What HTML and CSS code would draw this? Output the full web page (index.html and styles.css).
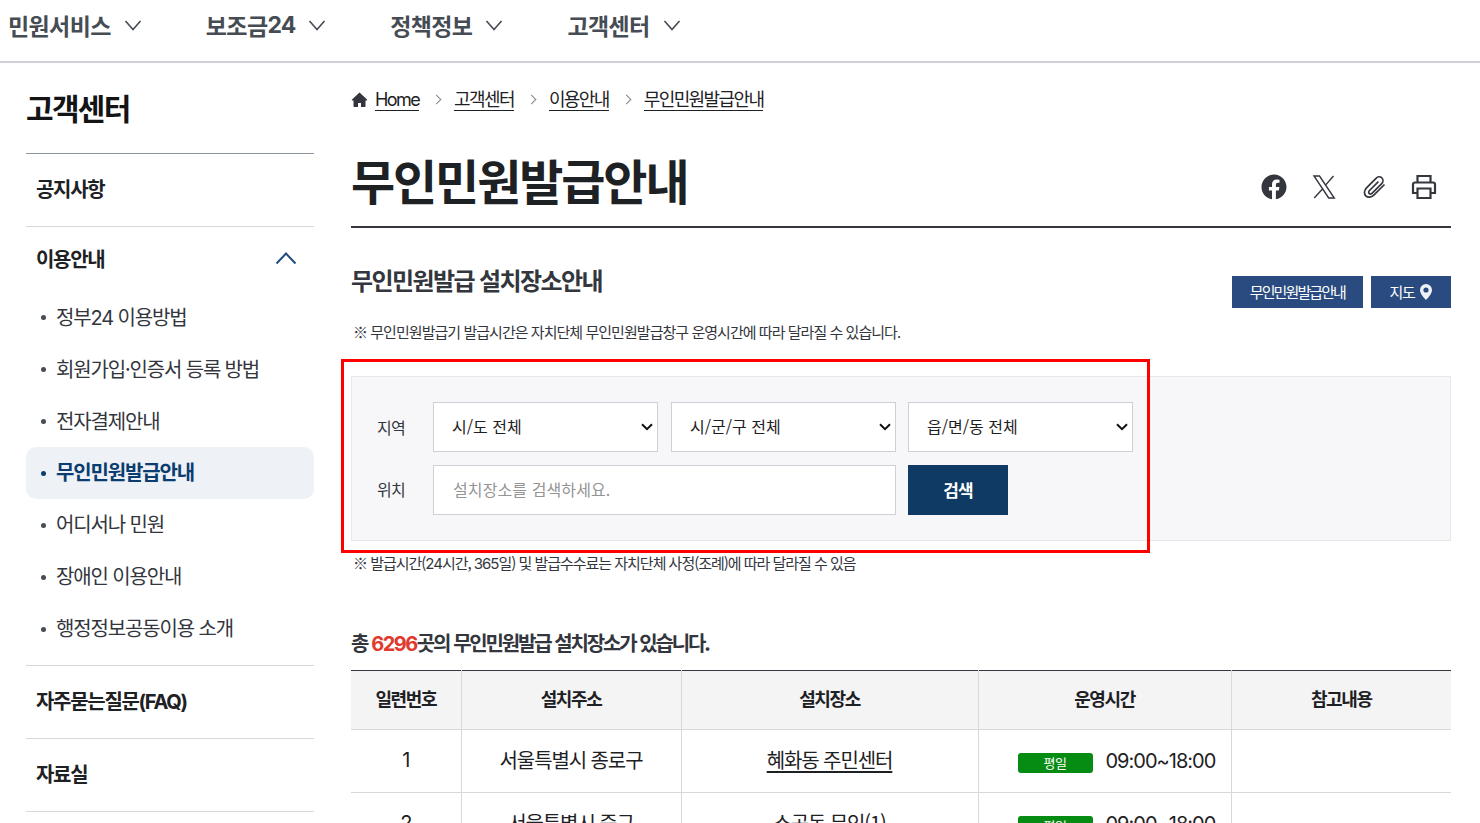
FILE: index.html
```html
<!DOCTYPE html>
<html lang="ko">
<head>
<meta charset="utf-8">
<title>무인민원발급안내</title>
<link rel="stylesheet" href="styles.css">
</head>
<body>
<header class="topbar">
  <nav class="gnb">
    <a class="gnb-item">민원서비스<svg class="chev" viewBox="0 0 18 12"><path d="M1.500 2 9 10.500 16.500 2"/></svg></a>
    <a class="gnb-item">보조금<span class="lat num">24</span><svg class="chev" viewBox="0 0 18 12"><path d="M1.500 2 9 10.500 16.500 2"/></svg></a>
    <a class="gnb-item">정책정보<svg class="chev" viewBox="0 0 18 12"><path d="M1.500 2 9 10.500 16.500 2"/></svg></a>
    <a class="gnb-item">고객센터<svg class="chev" viewBox="0 0 18 12"><path d="M1.500 2 9 10.500 16.500 2"/></svg></a>
  </nav>
</header>
<div class="wrap">
  <aside class="side">
    <h2 class="side-title">고객센터</h2>
    <ul class="menu">
      <li class="menu-item"><a class="menu-link">공지사항</a></li>
      <li class="menu-item open">
        <a class="menu-link">이용안내<svg class="up" viewBox="0 0 22 14"><path d="M1.500 12.500 11 2.500l9.500 10"/></svg></a>
        <ul class="sub">
          <li>정부<span class="lat">24</span> 이용방법</li>
          <li>회원가입·인증서 등록 방법</li>
          <li>전자결제안내</li>
          <li class="on">무인민원발급안내</li>
          <li>어디서나 민원</li>
          <li>장애인 이용안내</li>
          <li>행정정보공동이용 소개</li>
        </ul>
      </li>
      <li class="menu-item"><a class="menu-link"><span>자주묻는질문<span class="lat">(FAQ)</span></span></a></li>
      <li class="menu-item"><a class="menu-link">자료실</a></li>
    </ul>
  </aside>
  <main class="main">
    <div class="crumbs">
      <svg class="home" viewBox="0 0 16 16"><path d="M8 .5.500 7.500c-.4.4-.1 1 .4 1H2v5.500c0 .6.4 1 1 1h3.500v-4h3v4H13c.6 0 1-.4 1-1V8.500h1.100c.5 0 .8-.6.4-1z"/></svg>
      <a class="crumb crumb-home lat">Home</a><span class="sep"></span>
      <a class="crumb">고객센터</a><span class="sep"></span>
      <a class="crumb">이용안내</a><span class="sep"></span>
      <a class="crumb">무인민원발급안내</a>
    </div>
    <div class="title-row">
      <h1 class="page-title">무인민원발급안내</h1>
      <div class="tools">
        <svg class="tool" viewBox="0 0 26 26"><path class="fill" d="M25.500 13C25.500 6.100 19.900.5 13 .5S.5 6.100.5 13c0 6.200 4.600 11.400 10.500 12.300v-8.700H7.900V13H11v-2.700c0-3.100 1.900-4.900 4.700-4.900 1.400 0 2.800.3 2.800.3v3.100h-1.600c-1.500 0-2 1-2 1.900V13h3.500l-.6 3.600h-2.900v8.700c6-1 10.600-6.100 10.600-12.300z"/></svg>
        <svg class="tool" viewBox="0 0 26 26"><path class="line thin" d="M3 2h5.500L23.300 24h-5.600zM22.500 2 14.300 11.400M11.700 14.700 3.200 24"/></svg>
        <svg class="tool" viewBox="0 0 26 26"><path class="line slim" d="M23.500 10.500 12.800 21.200c-2.400 2.400-6 2.700-8 .7s-1.700-5.600.7-8L15 4.400c1.700-1.700 4.300-2 5.900-.4 1.600 1.600 1.300 4.200-.4 5.900l-9.300 9.300c-.9.900-2.200 1-3 .3-.8-.8-.6-2.100.3-3l8.900-8.900"/></svg>
        <svg class="tool" viewBox="0 0 26 26"><path class="line" d="M6.500 8.500V2h13v6.500M6.500 19H2V10.500a2 2 0 0 1 2-2h18a2 2 0 0 1 2 2V19h-4.500M6.500 14.500h13V24h-13z"/></svg>
      </div>
    </div>
    <section class="sect-head">
      <div>
        <h3 class="sect-title">무인민원발급 설치장소안내</h3>
        <p class="note first">※ 무인민원발급기 발급시간은 자치단체 무인민원발급창구 운영시간에 따라 달라질 수 있습니다.</p>
      </div>
      <div class="btns">
        <a class="btn">무인민원발급안내</a>
        <a class="btn map">지도<svg class="pin" viewBox="0 0 12 16"><path fill-rule="evenodd" d="M6 0a6 6 0 0 0-6 6c0 3.800 4.400 8.500 6 10 1.600-1.500 6-6.200 6-10a6 6 0 0 0-6-6zm0 3.400a2.600 2.600 0 1 1 0 5.200 2.600 2.600 0 0 1 0-5.200z"/></svg></a>
      </div>
    </section>
    <section class="search">
      <div class="search-row">
        <label class="lab">지역</label>
        <select class="sel"><option>시/도 전체</option></select>
        <select class="sel"><option>시/군/구 전체</option></select>
        <select class="sel"><option>읍/면/동 전체</option></select>
      </div>
      <div class="search-row second-row">
        <label class="lab">위치</label>
        <input class="inp" type="text" placeholder="설치장소를 검색하세요.">
        <button class="go">검색</button>
      </div>
      <div class="redbox"></div>
    </section>
    <p class="note second">※ 발급시간(<span class="lat">24</span>시간, <span class="lat">365</span>일) 및 발급수수료는 자치단체 사정(조례)에 따라 달라질 수 있음</p>
    <p class="total">총 <em class="lat">6296</em>곳의 무인민원발급 설치장소가 있습니다.</p>
    <table class="tbl">
      <colgroup><col class="c1"><col class="c2"><col class="c3"><col class="c4"><col></colgroup>
      <thead><tr><th>일련번호</th><th>설치주소</th><th>설치장소</th><th>운영시간</th><th>참고내용</th></tr></thead>
      <tbody>
        <tr><td class="lat">1</td><td>서울특별시 종로구</td><td><a class="place">혜화동 주민센터</a></td><td class="time"><span class="badge">평일</span><span class="lat">09:00~18:00</span></td><td></td></tr>
        <tr><td class="lat">2</td><td>서울특별시 중구</td><td><a class="place">소공동 무인(1)</a></td><td class="time"><span class="badge">평일</span><span class="lat">09:00~18:00</span></td><td></td></tr>
      </tbody>
    </table>
  </main>
</div>
</body>
</html>
```
FILE: styles.css
```css
* { box-sizing: border-box; }
html, body { margin: 0; height: 823px; overflow: hidden; background: #fff; }
body { font-family: "Noto Sans CJK KR", "Noto Sans", sans-serif; color: #1e2124; }
ul { list-style: none; margin: 0; padding: 0; }
h1, h2, h3, p { margin: 0; }
a { color: inherit; }
.lat { font-family: Inter, "Noto Sans CJK KR", sans-serif; }

.topbar { height: 63px; border-bottom: 2px solid #cdd1d5; }
.gnb { display: flex; gap: 64px; height: 50px; align-items: center; padding-left: 8px; }
.gnb-item { display: flex; align-items: center; font-size: 23px; font-weight: 700; letter-spacing: -0.6px; color: #464c53; }
.num { letter-spacing: -1px; }
.chev { width: 18px; height: 12px; margin-left: 13px; fill: none; stroke: #464c53; stroke-width: 1.6; }

.wrap { display: flex; padding: 0 29px 0 26px; }
.side { width: 288px; flex: none; margin-right: 37px; }
.side-title { height: 91px; padding-top: 22px; font-size: 30px; line-height: 44px; font-weight: 700; letter-spacing: -1.7px; color: #131416; border-bottom: 1px solid #8a949e; }
.menu-item { border-bottom: 1px solid #d6d9dc; }
.menu-link { display: flex; align-items: center; justify-content: space-between; height: 72px; padding: 0 17px 4px 10px; font-size: 20px; font-weight: 700; letter-spacing: -1.3px; color: #1e2124; }
.open .menu-link { height: 64px; padding-bottom: 2px; }
.up { width: 22px; height: 14px; fill: none; stroke: #1d4a7a; stroke-width: 1.9; }
.sub { padding-bottom: 10px; }
.sub li { position: relative; height: 52px; line-height: 50px; padding-left: 30px; font-size: 20px; letter-spacing: -1.15px; color: #33363d; border-radius: 10px; }
.sub li:nth-child(-n+3) { line-height: 52px; }
.sub li::before { content: ""; position: absolute; left: 15px; top: 24px; width: 5px; height: 5px; border-radius: 50%; background: #464c53; }
.sub li.on { background: #eef1f6; color: #0b3d70; font-weight: 700; }
.sub li.on::before { background: #0b3d70; }

.main { width: 1100px; flex: none; }
.crumbs { display: flex; align-items: center; height: 26px; margin-top: 22px; font-size: 18px; letter-spacing: -1.6px; color: #1e2124; }
.home { width: 17px; height: 16px; margin: 4px 7px 0 0; fill: #33363d; }
.crumb { height: 25px; line-height: 24px; border-bottom: 1px solid #1e2124; }
.crumb-home { line-height: 28px; }
.sep { width: 7px; height: 7px; margin: 2px 14px 0 14px; border-top: 1.5px solid #83838f; border-right: 1.5px solid #83838f; transform: rotate(45deg); }
.title-row { display: flex; align-items: center; justify-content: space-between; height: 100px; margin-top: 17px; border-bottom: 2px solid #33363d; }
.page-title { font-size: 48px; line-height: 70px; font-weight: 700; letter-spacing: -2.1px; color: #1e2124; margin-top: 4px; }
.tools { display: flex; gap: 24px; margin-right: 14px; margin-top: 20px; }
.tool { width: 26px; height: 26px; display: block; }
.fill { fill: #33363d; }
.line { fill: none; stroke: #33363d; stroke-width: 2.2; }
.line.thin { stroke-width: 1.4; }
.line.slim { stroke-width: 1.7; }

.sect-head { display: flex; justify-content: space-between; height: 148px; padding-top: 34px; }
.sect-title { font-size: 24px; line-height: 36px; font-weight: 700; letter-spacing: -1.6px; color: #33363d; }
.note { font-size: 15px; letter-spacing: -0.96px; color: #33363d; line-height: 22px; }
.note.first { margin-top: 23px; padding-left: 2px; }
.btns { display: flex; gap: 8px; margin-top: 14px; }
.btn { display: flex; align-items: center; justify-content: center; height: 32px; background: #2a4b7f; color: #fff; font-size: 15px; letter-spacing: -1.9px; padding: 0 18px 2px; }
.btn.map { width: 80px; padding: 0 0 2px; letter-spacing: -1.4px; }
.pin { width: 12px; height: 16px; margin: 2px 0 0 6px; fill: #eef1f5; }

.search { position: relative; height: 165px; background: #f7f7f9; border: 1px solid #e6e8ea; padding: 25px 0 0 25px; }
.search-row { display: flex; align-items: center; height: 50px; margin-bottom: 13px; }
.lab { width: 56px; font-size: 16px; letter-spacing: -0.8px; color: #33363d; }
.second-row .lab { padding-bottom: 2px; }
.sel { width: 225px; height: 50px; margin-right: 13px; padding: 0 14px 2px 18px; border: 1px solid #cdd1d5; border-radius: 0; appearance: none; -webkit-appearance: none; background: #fff url("data:image/svg+xml,%3Csvg xmlns='http://www.w3.org/2000/svg' viewBox='0 0 12 8'%3E%3Cpath d='M1 1.200 6 6.200l5-5' fill='none' stroke='%23111' stroke-width='2'/%3E%3C/svg%3E") no-repeat right 4px center / 12px 8px; font: 16px "Noto Sans CJK KR", sans-serif; letter-spacing: 0; color: #1e2124; }
.sel + .sel + .sel { margin-left: -1px; }
.inp { width: 463px; height: 50px; margin-right: 12px; padding: 0 19px 2px; border: 1px solid #cdd1d5; background: #fff; border-radius: 0; font: 16px "Noto Sans CJK KR", sans-serif; letter-spacing: 0.1px; }
.inp::placeholder { color: #949494; opacity: 1; }
.go { width: 100px; height: 50px; padding: 0 0 2px; border: 0; background: #0f3a63; color: #fff; font: 700 17px "Noto Sans CJK KR", sans-serif; letter-spacing: -0.8px; }
.redbox { position: absolute; left: -11px; top: -18px; width: 809px; height: 194px; border: 3px solid #f00; pointer-events: none; }

.note.second { margin-top: 11px; padding-left: 2px; letter-spacing: -1.02px; }
.total { margin-top: 53px; font-size: 20px; line-height: 30px; font-weight: 700; letter-spacing: -2.2px; word-spacing: 0.6px; color: #33363d; }
.total em { font-style: normal; color: #e03a2e; letter-spacing: -1.5px; }

.tbl { width: 1100px; margin-top: 11px; border-collapse: collapse; table-layout: fixed; border-top: 1px solid #33363d; }
.c1 { width: 110px; } .c2 { width: 220px; } .c3 { width: 297px; } .c4 { width: 253px; }
.tbl th { height: 59px; padding: 0 0 5px; background: #f4f4f5; font-size: 18px; font-weight: 700; letter-spacing: -1.4px; color: #1e2124; border-left: 1px solid #d6d9dc; border-bottom: 1px solid #d6d9dc; }
.tbl td { height: 63px; padding: 0 0 3px; text-align: center; font-size: 20px; letter-spacing: -1.1px; color: #1e2124; border-left: 1px solid #d6d9dc; border-bottom: 1px solid #d6d9dc; }
.tbl th:first-child, .tbl td:first-child { border-left: 0; }
.place { text-decoration: underline; text-decoration-thickness: 2px; text-underline-offset: 3px; }
.tbl td.time { white-space: nowrap; text-align: left; padding-left: 39px; letter-spacing: -1px; }
.badge { display: inline-block; width: 75px; height: 20px; margin-right: 13px; background: #068b13; color: #fff; border-radius: 3px; text-align: center; font-size: 13px; line-height: 20px; letter-spacing: -0.5px; vertical-align: 0; }
```
